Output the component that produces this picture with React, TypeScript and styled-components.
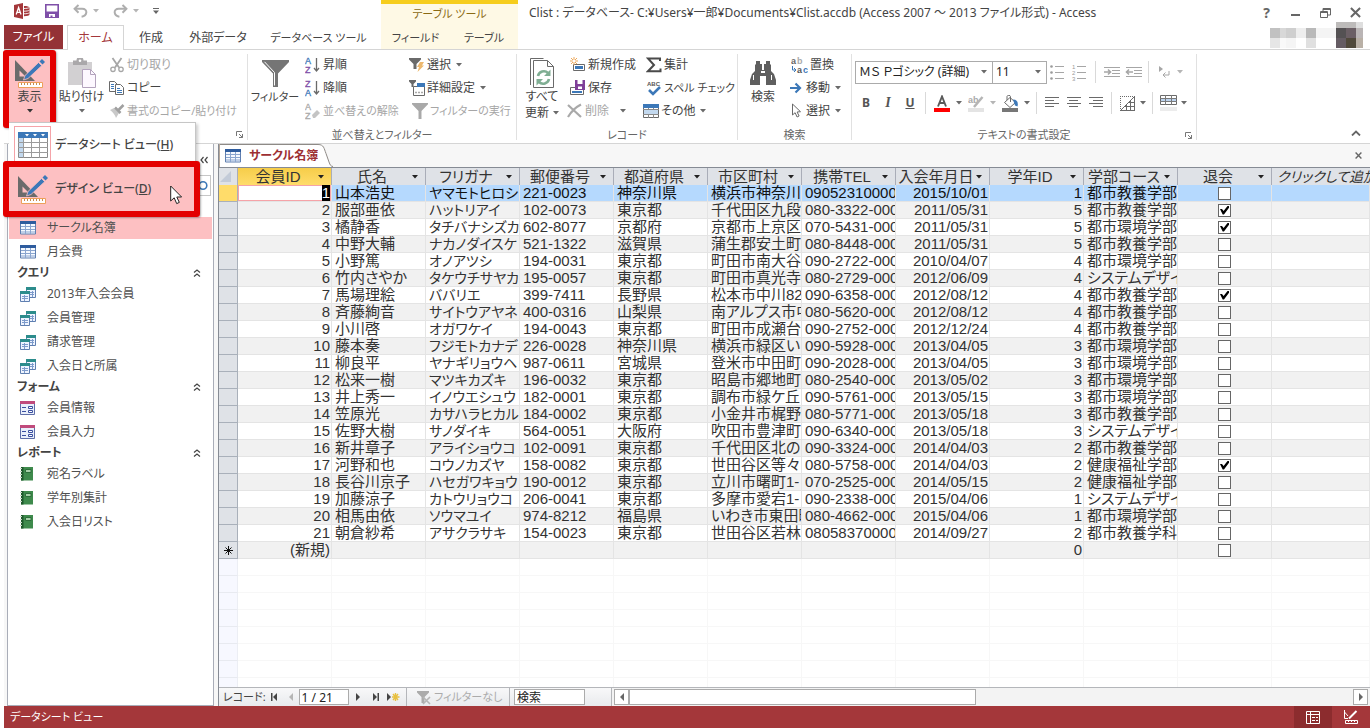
import React from "react";
import styled, { createGlobalStyle, css } from "styled-components";

const GlobalStyle = createGlobalStyle`
  *, *::before, *::after { box-sizing: border-box; }
  body { margin: 0; background: #fff; }
  body, button, input, select {
    font-family: "Noto Sans", "Noto Sans CJK JP", sans-serif;
    font-feature-settings: "palt";
    font-size: 12px;
    line-height: 16px;
    color: #444;
  }
  button { border: 0; padding: 0; background: none; white-space: nowrap; }
`;

const RED = "#a4373a";
const BLUE = "#3c78b8";
const GREY = "#6a6a6a";

/* ---------- icons ---------- */

const Caret = ({ color = "#6a6a6a" }: { color?: string }) => (
  <svg width="6" height="4" viewBox="0 0 6 4" aria-hidden="true">
    <path d="M0 0h6L3 3.5z" fill={color} />
  </svg>
);

const AccessLogo = () => (
  <svg width="17" height="16" viewBox="0 0 17 16" aria-hidden="true">
    <path d="M0 2l9-2v16l-9-2z" fill={RED} />
    <path d="M2.2 11.5L4.6 4.5l2.4 7M3.1 9.4h3" stroke="#fff" strokeWidth="1.3" fill="none" />
    <path d="M10 3c3 0 5.500.600 5.500 1.500v7c0 1-2.500 1.700-5.500 1.700z" fill={RED} />
    <path d="M10 5.500c2.500 0 4.500-.400 5.500-1M10 8.200c2.500 0 4.500-.400 5.500-1M10 10.800c2.500 0 4.500-.400 5.500-1" fill="none" stroke="#fff" strokeWidth=".9" />
  </svg>
);

const SaveIcon = () => (
  <svg width="14" height="14" viewBox="0 0 14 14" aria-hidden="true">
    <path d="M.8.8h12.4v12.4H.8z" fill="#fff" stroke="#7f4fa8" strokeWidth="1.6" />
    <path d="M1 7.500h12V13H1z" fill="#7f4fa8" />
    <path d="M4 10h6v3H7.500v-1.500H5.500V13H4z" fill="#fff" />
  </svg>
);

const UndoIcon = ({ flip = false }: { flip?: boolean }) => (
  <svg width="15" height="14" viewBox="0 0 15 14" aria-hidden="true">
    <g transform={flip ? "translate(15 0) scale(-1 1)" : undefined} fill="none" stroke="#aeaeae" strokeWidth="2">
      <path d="M5.5 1L1.6 4.8l3.9 3.9" />
      <path d="M2 4.8h7.2c6 0 5.2 7-.6 8" />
    </g>
  </svg>
);

const DesignIcon = () => (
  <svg width="30" height="29" viewBox="0 0 30 29" aria-hidden="true">
    <path d="M0 1v21h20z" fill="#6b6b6b" />
    <path d="M4.500 11.500v6h6z" fill="#fdc0c2" />
    <path d="M27 0l3 3-2.500 2.500-3-3z" fill={BLUE} />
    <path d="M23.500 3.500l3.200 3.200L13 19.500 8.500 21l1.500-4.500z" fill={BLUE} stroke="#fdc0c2" strokeWidth=".8" />
    <path d="M3.500 23.500h24v5h-24z" fill="#fff" stroke="#eda05a" />
    <path d="M6.500 24v2M9.500 24v2M12.500 24v2M15.500 24v2M18.500 24v2M21.500 24v2M24.500 24v2" stroke="#c98a4e" />
  </svg>
);

const SheetIcon = () => (
  <svg width="30" height="26" viewBox="0 0 30 26" aria-hidden="true">
    <path d="M.5.5h29v25H.5z" fill="#fff" stroke="#8a8a8a" />
    <path d="M0 0h30v6H0z" fill={BLUE} />
    <path d="M1 6h4v19H1z" fill="#c3d9ef" />
    <path d="M5.500 6v20M13.500 6v20M21.500 6v20M0 10.500h30M0 15.500h30M0 20.500h30" stroke="#9b9b9b" />
    <path d="M7 2h4l-2 2.500zM15 2h4l-2 2.500zM23 2h4l-2 2.500z" fill="#fff" />
  </svg>
);

const PasteIcon = () => (
  <svg width="28" height="31" viewBox="0 0 28 31" aria-hidden="true">
    <path d="M0 4h24v23H0z" fill="#d2d0d2" />
    <path d="M5 2.500h3.500a3.500 3.500 0 0 1 7 0H19V7H5z" fill="#aaa8aa" />
    <circle cx="12" cy="2.800" r="1.300" fill="#fff" />
    <path d="M14.500 11.500h8l5 5v13h-13z" fill="#fdf8ff" stroke="#b3a3bd" />
    <path d="M22.500 11.500v5h5" fill="none" stroke="#b3a3bd" />
  </svg>
);

const CutIcon = () => (
  <svg width="16" height="16" viewBox="0 0 16 16" fill="none" stroke="#a6a6a6" aria-hidden="true">
    <path d="M3.500 1l6.500 9.500M12.500 1L6 10.500" strokeWidth="1.800" />
    <circle cx="4" cy="12.300" r="2.200" strokeWidth="1.300" />
    <circle cx="12" cy="12.300" r="2.200" strokeWidth="1.300" />
  </svg>
);

const CopyIcon = () => (
  <svg width="16" height="16" viewBox="0 0 16 16" fill="#fff" stroke="#6a6a6a" aria-hidden="true">
    <path d="M.500 1.500h5l3 3v7h-8z" />
    <path d="M2 4.500h3M2 6.500h3M2 8.500h3" stroke={BLUE} />
    <path d="M6.500 4.500h5l3 3v7h-8z" />
    <path d="M8 8.500h3M8 10.500h5M8 12.500h5" stroke={BLUE} />
  </svg>
);

const BrushIcon = () => (
  <svg width="16" height="16" viewBox="0 0 16 16" aria-hidden="true">
    <path d="M1 7l4-2 5 5-3 5c-1-3-3-6-6-8z" fill="#c9c9c9" />
    <path d="M6 4.500l5.500 5.500M9.500 7L14.500 2" stroke="#a0a0a0" strokeWidth="2.600" />
  </svg>
);

const FunnelIcon = ({ size = 27, color = "#757575" }: { size?: number; color?: string }) => (
  <svg width={size} height={size} viewBox="0 0 27 27" aria-hidden="true">
    <path d="M0 0h27v2L16 13.500V27h-5V13.500L0 2z" fill={color} />
    {size > 20 && <path d="M2.500 1.800L12.500 12.500V25.500" fill="none" stroke="#fff" />}
  </svg>
);

type SortProps = { top: string; bottom: string; topColor: string; bottomColor: string; clear?: boolean };
const SortIcon = ({ top, bottom, topColor, bottomColor, clear }: SortProps) => (
  <svg width="16" height="18" viewBox="0 0 16 18" aria-hidden="true" fontFamily="Liberation Sans" fontSize="9">
    <text x="0" y="8" fill={topColor} stroke={topColor} strokeWidth=".3">{top}</text>
    <text x="0" y="17" fill={bottomColor} stroke={bottomColor} strokeWidth=".3">{bottom}</text>
    {clear ? (
      <path d="M7 13l5-5 3 3-5 5H8z" fill="#c4c4c4" />
    ) : (
      <path d="M11.500 2v13M9 12l2.500 3 2.500-3" fill="none" stroke="#6a6a6a" strokeWidth="1.300" />
    )}
  </svg>
);

const FilterSelectIcon = () => (
  <svg width="16" height="16" viewBox="0 0 16 16" aria-hidden="true">
    <path d="M0 1h12v1.500L7.500 7v5H4.500V7L0 2.500z" fill={GREY} />
    <path d="M11 5h4l-2 3.500h2L8.500 15l1.500-5H8z" fill="#edb96f" />
  </svg>
);

const AdvancedIcon = () => (
  <svg width="16" height="16" viewBox="0 0 16 16" aria-hidden="true">
    <path d="M4.500 6.500h11v9h-11z" fill="#fff" stroke="#6a6a6a" />
    <path d="M8 3h8v4H8z" fill={BLUE} />
    <path d="M0 0h7v1.500L4.500 4v3h-2V4L0 1.500z" fill={GREY} />
    <path d="M6.500 12.500h1M9.500 12.500h1M12.500 12.500h1" stroke="#555" strokeWidth="1.500" />
  </svg>
);

const RefreshIcon = () => (
  <svg width="25" height="31" viewBox="0 0 25 31" aria-hidden="true" fill="#fff" stroke="#6a6a6a">
    <path d="M.500 27V.500h13" fill="none" />
    <path d="M3.500 2.500h14l6 6v21h-20z" />
    <path d="M17.500 2.500v6h6" fill="none" />
    <path d="M8 18a6 6 0 0 1 10-3M19 21a6 6 0 0 1-10 3" fill="none" stroke="#7fae93" strokeWidth="2.600" />
    <path d="M20.500 11.500v6.500h-6.500zM6.500 27.500v-6.500h6.500z" fill="#7fae93" stroke="none" />
  </svg>
);

const NewRecordIcon = () => (
  <svg width="16" height="16" viewBox="0 0 16 16" aria-hidden="true">
    <path d="M3.500 7.500h11v6h-11z" fill="#fff" stroke="#6a6a6a" />
    <path d="M5 9h8v3H5z" fill={BLUE} />
    <path d="M4 0v8M0 4h8M1 1l6 6M7 1L1 7" stroke="#eda95c" />
    <circle cx="4" cy="4" r="1.300" fill="#fff" />
  </svg>
);

const SaveRecordIcon = () => (
  <svg width="16" height="16" viewBox="0 0 16 16" aria-hidden="true">
    <path d="M.500 7.500h13v7H.500z" fill="#fff" stroke="#6a6a6a" />
    <path d="M2 11h10v2H2z" fill={BLUE} />
    <path d="M5 0h10v10H5z" fill="#7f3f98" />
    <path d="M7.500 0h5v4h-5zM8 6.500h4V9H8z" fill="#fff" />
  </svg>
);

const DeleteIcon = () => (
  <svg width="16" height="16" viewBox="0 0 16 16" aria-hidden="true">
    <path d="M1 2l13 12M14 1.500C9 4 4 9 1 14" stroke="#a9a9a9" strokeWidth="2.200" fill="none" />
  </svg>
);

const SigmaIcon = () => (
  <svg width="16" height="16" viewBox="0 0 16 16" aria-hidden="true">
    <path d="M14 4V1.500H2L8 8l-6 6.200h12.500V11.500" fill="none" stroke="#4a4a4a" strokeWidth="2" />
  </svg>
);

const SpellIcon = () => (
  <svg width="16" height="16" viewBox="0 0 16 16" aria-hidden="true">
    <text x="1" y="6" fontFamily="Liberation Sans" fontWeight="bold" fontSize="6" fill="#555">ABC</text>
    <path d="M3 10l4 4 7-7" fill="none" stroke={BLUE} strokeWidth="2.600" />
  </svg>
);

const MoreIcon = () => (
  <svg width="16" height="16" viewBox="0 0 16 16" aria-hidden="true">
    <path d="M.500 1.500h15v13H.500z" fill="#fff" stroke="#6a6a6a" />
    <path d="M0 1h16v4H0z" fill={BLUE} />
    <path d="M5.500 5v10M10.500 5v10" stroke="#8a8a8a" />
    <path d="M1 7h14v4H1z" fill="#c3d9ef" />
    <path d="M0 11.500h16M0 6.500h16" stroke="#8a8a8a" />
  </svg>
);

const BinocularsIcon = () => (
  <svg width="26" height="24" viewBox="0 0 26 24" aria-hidden="true" fill="#5f5f5f">
    <path d="M6 0h4v3h2v6h2V3h2V0h4v3l1 1v6l3 3 2 6v5h-10v-9h-6v9H0v-5l2-6 3-3V4l1-1z" />
    <path d="M3.500 14v5M21.500 14v5" stroke="#fff" />
    <path d="M11 10h4v2h-4z" fill="#fff" />
  </svg>
);

const ReplaceIcon = () => (
  <svg width="17" height="17" viewBox="0 0 17 17" aria-hidden="true" fontFamily="Liberation Sans" fontSize="9" fontWeight="bold">
    <text x="0" y="7" fill="#666">a</text>
    <text x="6" y="7" fill="#aaa">b</text>
    <text x="6" y="16" fill="#555">a</text>
    <text x="12" y="16" fill={BLUE}>c</text>
    <path d="M1.500 9v4H5M3 11l2 2-2 2" fill="none" stroke={BLUE} />
  </svg>
);

const GotoIcon = () => (
  <svg width="16" height="16" viewBox="0 0 16 16" aria-hidden="true">
    <path d="M2 8h9M7.500 3.500L12 8l-4.500 4.500" fill="none" stroke={BLUE} strokeWidth="2.200" />
  </svg>
);

const PointerIcon = () => (
  <svg width="16" height="16" viewBox="0 0 16 16" aria-hidden="true">
    <path d="M4.500 1v11l2.600-2.300 2 4.300 2-1-2-4 3.400-.300z" fill="#fff" stroke="#6a6a6a" />
  </svg>
);

const ListIcon = ({ numbered = false }: { numbered?: boolean }) => (
  <svg width="16" height="17" viewBox="0 0 16 17" aria-hidden="true" fontFamily="Liberation Sans" fontSize="6" fill="#9a9a9a">
    <path d="M5 2.500h9M5 8.500h9M5 14.500h9" stroke="#a6a6a6" />
    {numbered ? (
      <>
        <text x="0" y="5">1</text><text x="0" y="11">2</text><text x="0" y="17">3</text>
      </>
    ) : (
      <>
        <circle cx="1.500" cy="2.500" r="1.300" /><circle cx="1.500" cy="8.500" r="1.300" /><circle cx="1.500" cy="14.500" r="1.300" />
      </>
    )}
  </svg>
);

const IndentIcon = ({ out = false }: { out?: boolean }) => (
  <svg width="17" height="12" viewBox="0 0 17 12" aria-hidden="true" stroke="#a6a6a6" fill="none">
    <path d="M1 1.500h16M9 4.500h8M9 7.500h8M1 10.500h16" />
    <path d={out ? "M8 6H1.500M4 3.500L1.500 6 4 8.500" : "M1 6h6.500M5 3.500L7.500 6 5 8.500"} strokeWidth="1.600" />
  </svg>
);

const DirectionIcon = () => (
  <svg width="12" height="12" viewBox="0 0 12 12" aria-hidden="true">
    <path d="M1 0v6l4-3z" fill="#a6a6a6" />
    <path d="M11 5v4H5M7.500 6.500L5 9l2.500 2.500" fill="none" stroke="#a6a6a6" />
  </svg>
);

const FontColorIcon = () => (
  <svg width="16" height="17" viewBox="0 0 16 17" aria-hidden="true">
    <path d="M4 11.500L8 1.500l4 10M5.500 8h5" fill="none" stroke="#5a5a5a" strokeWidth="1.900" />
    <path d="M0 13h16v4H0z" fill="#f00" />
  </svg>
);

const HighlightIcon = () => (
  <svg width="16" height="17" viewBox="0 0 16 17" aria-hidden="true">
    <text x="0" y="8" fontFamily="Liberation Sans" fontWeight="bold" fontSize="9" fill="#aaa">ab</text>
    <path d="M6 12l8.500-10" stroke="#b5b5b5" strokeWidth="2.500" />
    <path d="M0 13h16v4H0z" fill="#e4e4e4" />
  </svg>
);

const FillIcon = () => (
  <svg width="17" height="17" viewBox="0 0 17 17" aria-hidden="true">
    <path d="M8 2.500L2.500 7.500 8 12.500l5.500-5z" fill="#fff" stroke="#6a6a6a" />
    <path d="M5 5V1.500C5 0 8.500 0 8.500 1.500V7" fill="none" stroke="#6a6a6a" />
    <path d="M11 4.500c4 0 5.500 3 4.500 7l-2.500-1z" fill={BLUE} />
    <path d="M0 13h16v4H0z" fill="#777" />
  </svg>
);

const alignLines = {
  left: "M1 3.500h9M1 9.500h9",
  center: "M3 3.500h9M3 9.500h9",
  right: "M5 3.500h10M5 9.500h10",
};
const AlignIcon = ({ kind }: { kind: keyof typeof alignLines }) => (
  <svg width="16" height="12" viewBox="0 0 16 12" aria-hidden="true" stroke="#6a6a6a">
    <path d={"M1 .500h14M1 6.500h14" + alignLines[kind]} />
  </svg>
);

const GridlinesIcon = () => (
  <svg width="15" height="15" viewBox="0 0 15 15" aria-hidden="true" fill="none" stroke="#6a6a6a">
    <path d="M0 .500h15M.500 0v14" strokeDasharray="1 1" />
    <path d="M0 14.500h15M14.500 1v14M1 14L14 1M4 10.500h10M8 6.500h6M6.500 9v5M10.500 5v9" />
  </svg>
);

const AltRowIcon = () => (
  <svg width="17" height="16" viewBox="0 0 17 16" aria-hidden="true">
    <path d="M.500.500h16v9H.500z" fill="#fff" stroke="#6a6a6a" />
    <path d="M1 4h15v2H1z" fill="#bcd3ee" />
    <path d="M0 3.500h17M0 6.500h17M5.500 0v10M11.500 0v10" stroke="#7a7a7a" />
    <path d="M0 12h17v4H0z" fill="#ececec" />
  </svg>
);

const LauncherIcon = () => (
  <svg width="7" height="7" viewBox="0 0 7 7" aria-hidden="true" fill="none" stroke="#777">
    <path d="M.500 5V.500H6M3 3l3.500 3.500M6.500 3v3.500H3" />
  </svg>
);

const TableIcon = () => (
  <svg width="16" height="14" viewBox="0 0 16 14" aria-hidden="true">
    <path d="M.500.500h15v12.500H.500z" fill="#f5f9ff" stroke="#5f7fb0" />
    <path d="M0 0h16v3H0z" fill="#2e5c9e" />
    <path d="M1 5.500h14M1 8.500h14M1 11h14M5.500 3v10M10.500 3v10" stroke="#8aa5cf" />
  </svg>
);

const QueryIcon = () => (
  <svg width="16" height="15" viewBox="0 0 16 15" aria-hidden="true">
    <path d="M6.500.500h9v10h-9z" fill="#eef4ff" stroke="#5f7fb0" />
    <path d="M6 0h10v3H6z" fill="#2c8c8c" />
    <path d="M8 5.500h6M8 7.500h6M12.500 4v6" stroke="#7d9bcb" />
    <path d="M.500 4.500h9v10h-9z" fill="#eef4ff" stroke="#5f7fb0" />
    <path d="M0 4h10v3H0z" fill="#2c8c8c" />
    <path d="M2 9.500h6M2 11.500h6M4.500 8v6" stroke="#7d9bcb" />
  </svg>
);

const FormIcon = () => (
  <svg width="15" height="14" viewBox="0 0 15 14" aria-hidden="true">
    <path d="M.500.500h14v13H.500z" fill="#e9effb" stroke="#5f6fa8" />
    <path d="M0 0h15v3H0z" fill="#c04a7c" />
    <path d="M2 6.500h4M2 10.500h4" stroke="#3a4fa0" />
    <path d="M8.500 5.500h4v2h-4zM8.500 9.500h4v2h-4z" fill="#fff" stroke="#3a4fa0" />
  </svg>
);

const ReportIcon = () => (
  <svg width="14" height="14" viewBox="0 0 14 14" aria-hidden="true">
    <path d="M1 0h12v13.500H1z" fill="#3e8a4c" />
    <path d="M1 0h2.500v13.500H1z" fill="#1f5a2c" />
    <path d="M0 1.500h2M0 4.500h2M0 7.500h2M0 10.500h2" stroke="#c8d8c8" />
    <path d="M5.500 2.500h5.500v3H5.500z" fill="#a6cfa8" stroke="#2c6e3a" />
  </svg>
);

const iconFor = { table: TableIcon, query: QueryIcon, form: FormIcon, report: ReportIcon };

const DoubleChevron = ({ left = false }: { left?: boolean }) => (
  <svg width="8" height="8" viewBox="0 0 8 8" aria-hidden="true" fill="none" stroke="#444" strokeWidth="1.200">
    <path d={left ? "M3.500 1L1 4l2.500 3M7.500 1L5 4l2.500 3" : "M1 3.500L4 1l3 2.500M1 7.500L4 5l3 2.500"} />
  </svg>
);

const Cross = ({ size = 12, stroke = 2.2 }: { size?: number; stroke?: number }) => (
  <svg width={size} height={size} viewBox="0 0 12 12" aria-hidden="true">
    <path d="M1 1l10 10M11 1L1 11" stroke="#666" strokeWidth={stroke} />
  </svg>
);

const Arrow = ({ kind, color = "#444" }: { kind: "first" | "prev" | "next" | "last" | "new"; color?: string }) => (
  <svg width="14" height="8" viewBox="0 0 14 8" aria-hidden="true" fill={color}>
    {kind === "first" && <path d="M4 0h1.500v8H4zM10 0v8L6 4z" />}
    {kind === "prev" && <path d="M9 0v8L5 4z" />}
    {kind === "next" && <path d="M5 0v8l4-4z" />}
    {kind === "last" && <path d="M4 0v8l4-4zM8.500 0H10v8H8.500z" />}
    {kind === "new" && (
      <>
        <path d="M1 0v8l4-4z" />
        <path d="M9.500 0v8M6 4h7.500M7 1l5 6M12 1L7 7" stroke="#e8c040" strokeWidth="1.400" />
      </>
    )}
  </svg>
);

/* ---------- window header ---------- */

const Shell = styled.div`
  display: flex;
  flex-direction: column;
  height: 100vh;
  padding-left: 4px;
  overflow: hidden;
`;

const Header = styled.header`
  display: flex;
  flex: none;
  height: 50px;
  border-bottom: 1px solid #d5d5d5;
`;

const LeftHead = styled.div`
  display: grid;
  grid-template-rows: 25px 25px;
  width: 377px;
`;

const QuickAccess = styled.div`
  display: flex;
  align-items: center;
  gap: 14px;
  padding: 0 0 3px 10px;
`;

const PlainButton = styled.button<{ $gap?: number }>`
  display: inline-flex;
  align-items: center;
  gap: ${(p) => p.$gap ?? 0}px;
`;

const Tabs = styled.nav`
  display: flex;
`;

const Tab = styled.button<{ $w: number; $kind?: "file" | "active"; $compact?: boolean }>`
  width: ${(p) => p.$w}px;
  height: 25px;
  text-align: center;
  font-size: ${(p) => (p.$compact ? 11 : 12)}px;
  ${(p) => p.$kind === "file" && css`
    background: #943236;
    color: #fff;
    margin-right: 4px;
    height: 24px;
  `}
  ${(p) => p.$kind === "active" && css`
    background: #fff;
    color: ${RED};
    border: 1px solid #d5d5d5;
    border-bottom: 0;
  `}
`;

const ContextHead = styled.div`
  display: grid;
  grid-template-rows: 21px 24px;
  width: 137px;
  background: #fef9e5;
  border-top: 4px solid #f6cd1d;
`;

const ContextTitle = styled.div`
  padding-top: 2px;
  text-align: center;
  font-size: 11px;
  color: #8a6a14;
`;

const RightHead = styled.div`
  flex: 1;
  min-width: 0;
  display: grid;
  grid-template-rows: 22px 27px;
`;

const TitleRow = styled.div`
  display: flex;
  align-items: center;
  justify-content: space-between;
  padding: 3px 9px 0 11px;
  white-space: nowrap;
`;

const WindowButtons = styled.div`
  display: flex;
  align-items: center;
  gap: 19px;
`;

const HelpMark = styled.button`
  padding-right: 2px;
  font-size: 14px;
  font-weight: 700;
  color: #666;
`;

const Account = styled.div`
  justify-self: end;
  padding-right: 7px;
`;

/* ---------- ribbon ---------- */

const RibbonBar = styled.div`
  display: flex;
  flex: none;
  padding: 4px 0 3px;
  border-bottom: 1px solid #d5d5d5;
  background: #fff;
`;

const Group = styled.section<{ $w: number }>`
  width: ${(p) => p.$w}px;
  flex: none;
  border-right: 1px solid #e1e1e1;
`;

const GroupBody = styled.div<{ $indent?: number }>`
  display: flex;
  height: 74px;
  padding-left: ${(p) => p.$indent ?? 0}px;
`;

const GroupFooter = styled.div`
  display: grid;
  grid-template-columns: 16px 1fr 16px;
  height: 12px;
  font-size: 11px;
  line-height: 14px;
  text-align: center;
  color: #666;
  white-space: nowrap;
`;

const FooterLabel = styled.span`
  grid-column: 2;
`;

const Launcher = styled.button`
  display: grid;
  place-items: center;
`;

const BigButton = styled.button<{ $w: number; $compact?: boolean }>`
  display: flex;
  flex-direction: column;
  align-items: center;
  width: ${(p) => p.$w}px;
  padding-top: 3px;
  font-size: ${(p) => (p.$compact ? 11 : 12)}px;
`;

const BigIcon = styled.span`
  display: grid;
  place-items: center;
  height: 32px;
`;

const CaretSlot = styled.span`
  display: grid;
  place-items: center;
  height: 12px;
`;

const SmallColumn = styled.div<{ $w?: number }>`
  display: flex;
  flex-direction: column;
  gap: 1px;
  width: ${(p) => (p.$w ? p.$w + "px" : "auto")};
`;

const SmallButton = styled.button<{ $dim?: boolean; $compact?: boolean }>`
  display: flex;
  align-items: center;
  gap: 2px;
  height: 22px;
  font-size: ${(p) => (p.$compact ? 11 : 12)}px;
  color: ${(p) => (p.$dim ? "#a6a6a6" : "#444")};
  & > svg:first-child { flex: none; }
  & > svg:last-child { margin-left: 3px; }
`;

const ViewAnchor = styled.div`
  position: relative;
  z-index: 5;
  width: 41px;
  margin: 2px 7px 6px 5px;
`;

const ViewButton = styled.button`
  display: flex;
  flex-direction: column;
  align-items: center;
  width: 41px;
  height: 66px;
  padding-top: 1px;
  background: #fdc0c2;
`;

const HighlightFrame = styled.div`
  position: absolute;
  inset: -6px;
  border: 6px solid #e30000;
  border-radius: 3px;
  box-shadow: 1px 1px 2px rgba(0, 0, 0, 0.3);
  pointer-events: none;
`;

const Menu = styled.div`
  position: absolute;
  top: 66px;
  left: 0;
  width: 187px;
  border: 1px solid #c6c6c6;
  border-left: 0;
  background: #fff;
  box-shadow: 2px 2px 3px rgba(0, 0, 0, 0.2);
`;

const MenuItem = styled.button<{ $hot?: boolean }>`
  position: relative;
  display: flex;
  align-items: center;
  gap: 4px;
  width: 185px;
  height: 44px;
  padding-left: 5px;
  background: ${(p) => (p.$hot ? "#fdc0c2" : "#fff")};
  font-weight: 500;
  text-align: left;
`;

const MenuIcon = styled.span<{ $boxed?: boolean }>`
  display: grid;
  place-items: center;
  width: 37px;
  height: 38px;
  border: 1px solid ${(p) => (p.$boxed ? "#f5a3a8" : "transparent")};
`;

const MouseCursor = styled.svg`
  position: absolute;
  top: 18px;
  left: 161px;
`;

const FormatRows = styled.div`
  display: flex;
  flex-direction: column;
  gap: 9px;
  padding-top: 7px;
`;

const FormatRow = styled.div`
  display: flex;
  align-items: center;
  height: 22px;
`;

const Combo = styled.label<{ $w: number }>`
  display: grid;
  grid-template-columns: 1fr 16px;
  align-items: center;
  width: ${(p) => p.$w}px;
  height: 23px;
  border: 1px solid #ababab;
  & + & { border-left: 0; }
  & > select { grid-area: 1 / 1 / 2 / 3; }
  & > svg { grid-area: 1 / 2; justify-self: center; pointer-events: none; }
`;

const ComboSelect = styled.select`
  appearance: none;
  width: 100%;
  height: 21px;
  padding: 0 3px;
  border: 0;
  background: none;
  color: #222;
`;

const ToolButton = styled.button<{ $w?: number; $glyph?: "b" | "i" | "u" }>`
  display: grid;
  place-items: center;
  width: ${(p) => p.$w ?? 22}px;
  height: 22px;
  ${(p) => p.$glyph && css`font-weight: 700; font-size: 12px; color: #555;`}
  ${(p) => p.$glyph === "i" && css`font-style: italic; font-family: "Liberation Serif", serif; font-size: 14px;`}
  ${(p) => p.$glyph === "u" && css`text-decoration: underline;`}
`;

const Divider = styled.span`
  width: 1px;
  height: 22px;
  margin: 0 4px;
  background: #d9d9d9;
`;

const Collapse = styled.button`
  margin-left: auto;
  align-self: flex-end;
  padding: 0 9px 0 0;
`;

/* ---------- main area ---------- */

const Main = styled.main`
  display: flex;
  flex: 1;
  min-height: 0;
  padding-left: 3px;
  background: #f7f7f7;
`;

const NavPane = styled.aside`
  width: 207px;
  flex: none;
  border: 1px solid #a9adb8;
  border-top: 0;
  background: #fff;
`;

const NavTop = styled.div`
  display: flex;
  justify-content: flex-end;
  align-items: center;
  height: 31px;
  padding-right: 5px;
`;

const SearchBox = styled.label`
  display: flex;
  align-items: center;
  height: 21px;
  margin: 0 2px 20px 4px;
  padding-right: 2px;
  border: 1px solid #c6c6c6;
`;

const SearchInput = styled.input`
  flex: 1;
  min-width: 0;
  height: 18px;
  border: 0;
  outline: 0;
`;

const NavHeading = styled.h2`
  display: flex;
  align-items: center;
  justify-content: space-between;
  height: 18px;
  margin: 0;
  padding: 0 12px 0 9px;
  font-size: 12px;
  line-height: 18px;
  font-weight: 600;
`;

const NavList = styled.ul`
  margin: 0;
  padding: 0;
  list-style: none;
`;

const NavEntry = styled.li`
  padding: 1px;
`;

const NavItem = styled.a<{ $selected?: boolean }>`
  display: grid;
  grid-template-columns: 16px 1fr;
  align-items: center;
  gap: 11px;
  height: 22px;
  padding-left: 11px;
  background: ${(p) => (p.$selected ? "#fdc0c2" : "transparent")};
  color: #505050;
  text-decoration: none;
`;

const DocArea = styled.section`
  display: flex;
  flex-direction: column;
  flex: 1;
  min-width: 0;
  margin-left: 4px;
  border-left: 1px solid #868b94;
`;

const DocStrip = styled.div`
  display: flex;
  align-items: center;
  justify-content: space-between;
  flex: none;
  height: 23px;
  padding-right: 8px;
`;

const DocTab = styled.button`
  display: flex;
  align-items: center;
  height: 23px;
  border-left: 1px solid #b5a89c;
  color: #9d2f33;
  font-weight: 700;
`;

const DocTabFace = styled.span`
  display: flex;
  align-items: center;
  gap: 8px;
  height: 23px;
  padding-left: 5px;
  border-top: 1px solid #8e8a86;
  background: #fff;
`;

const GridView = styled.div`
  flex: 1;
  min-height: 0;
  overflow: hidden;
  border-top: 1px solid #868b94;
  background: #fff;
`;

const DataTable = styled.table`
  table-layout: fixed;
  width: 100%;
  border-collapse: separate;
  border-spacing: 0;
  font-family: "Liberation Sans", "Noto Sans CJK JP", sans-serif;
  font-size: 15px;
  line-height: 16px;
  color: #333;
`;

const SelectorCol = styled.col`
  width: 19px;
`;

const FieldCol = styled.col`
  width: 94px;
`;

const HeadCell = styled.th<{ $active?: boolean; $ghost?: boolean }>`
  height: 17px;
  padding: 0 5px 0 0;
  border-right: 1px solid #a9adb8;
  background: ${(p) => (p.$active ? "linear-gradient(#f6cd4a, #ffdc6a)" : "#dfe2e7")};
  font-weight: 400;
  white-space: nowrap;
  overflow: hidden;
  ${(p) => p.$ghost && css`
    padding: 0 0 0 5px;
    border-right: 0;
    font-size: 14px;
    font-style: italic;
    text-align: left;
  `}
`;

const HeadInner = styled.span`
  display: grid;
  grid-template-columns: 1fr 8px;
  align-items: center;
  height: 17px;
`;

const HeadText = styled.span`
  text-align: center;
`;

const SelectAllMark = styled.svg`
  display: block;
  margin: 0 auto;
`;

type CellProps = { $right?: boolean; $center?: boolean; $kana?: boolean; $editing?: boolean };
const Cell = styled.td<CellProps>`
  height: 17px;
  padding: 0 3px;
  border-right: 1px solid #e4e4e4;
  border-bottom: 1px solid #e4e4e4;
  white-space: nowrap;
  overflow: hidden;
  text-overflow: clip;
  text-align: ${(p) => (p.$right ? "right" : p.$center ? "center" : "left")};
  ${(p) => p.$right && css`padding-right: 1px;`}
  ${(p) => p.$kana && css`font-size: 14px;`}
  ${(p) => p.$editing && css`background: #fff; box-shadow: inset 0 0 0 1px #f5a3a8;`}
`;

const Selector = styled.th<{ $current?: boolean; $blank?: boolean }>`
  height: 17px;
  padding: 0;
  border-right: 1px solid ${(p) => (p.$blank ? "#eceef4" : "#a9b0ba")};
  border-bottom: 1px solid ${(p) => (p.$blank ? "#e8eaf0" : "#a9b0ba")};
  background: ${(p) => (p.$current ? "#ffdc6a" : p.$blank ? "#f7f8ff" : "#dfe2e7")};
  color: #222;
`;

const Row = styled.tr<{ $tone: "current" | "odd" | "even" | "blank" }>`
  background: ${(p) => ({ current: "#b5d9fe", odd: "#fff", even: "#f1f1f1", blank: "#fff" })[p.$tone]};
  ${(p) => p.$tone === "current" && css`color: #111;`}
  ${(p) => p.$tone === "blank" && css`& > td { border-color: #f7f7f7; }`}
`;

const EditSelection = styled.mark`
  background: #000;
  color: #fff;
`;

const Tick = styled.input`
  appearance: none;
  display: block;
  width: 13px;
  height: 13px;
  margin: 0 auto;
  padding: 1px;
  border: 1px solid #666;
  background: #fff;
  &:checked::before {
    content: "";
    display: block;
    width: 9px;
    height: 9px;
    background: #000;
    clip-path: polygon(0 38%, 22% 38%, 40% 62%, 88% 0, 100% 8%, 100% 26%, 44% 100%, 30% 100%);
  }
`;

const RecordBar = styled.div`
  display: flex;
  align-items: stretch;
  flex: none;
  height: 19px;
  border-top: 1px solid #b4b6ba;
  background: linear-gradient(#f8f8f9, #e8eaed);
`;

const RecordSection = styled.div<{ $w: number }>`
  display: flex;
  align-items: center;
  width: ${(p) => p.$w}px;
  flex: none;
  padding: 0 4px;
  border-right: 1px solid #b4b6ba;
  white-space: nowrap;
`;

const RecordLabel = styled.span`
  width: 42px;
  font-size: 11px;
`;

const FilterState = styled.button`
  display: flex;
  align-items: center;
  gap: 1px;
  font-size: 11px;
  color: #ababab;
`;

const RecordInput = styled.input<{ $w: number }>`
  width: ${(p) => p.$w}px;
  height: 16px;
  padding: 0 2px;
  border: 1px solid #ababab;
  background: #fff;
  color: #222;
  line-height: 14px;
`;

const NavStep = styled.button<{ $w: number }>`
  display: grid;
  place-items: center;
  width: ${(p) => p.$w}px;
`;

const ScrollBar = styled.div`
  display: flex;
  flex: 1;
  min-width: 0;
  padding: 1px 2px;
  background: #f3f3f3;
`;

const ScrollStep = styled.button`
  display: grid;
  place-items: center;
  width: 15px;
  flex: none;
  border: 1px solid #ababab;
  background: #fff;
`;

const ScrollThumb = styled.div`
  width: 46%;
  border: 1px solid #ababab;
  background: #fff;
`;

const ScrollRest = styled.div`
  flex: 1;
`;

const StatusBar = styled.footer`
  display: flex;
  align-items: center;
  flex: none;
  height: 22px;
  padding-left: 6px;
  background: ${RED};
  color: #fff;
`;

const StatusText = styled.span`
  flex: 1;
  font-size: 11px;
`;

const StatusButton = styled.button<{ $on?: boolean }>`
  display: grid;
  place-items: center;
  width: 38px;
  height: 22px;
  background: ${(p) => (p.$on ? "#8c2c2e" : "transparent")};
`;

/* ---------- data ---------- */

type Member = [string, string, string, string, string, string, string, number, string, boolean?];

const members: Member[] = [
  ["山本浩史", "ヤマモトヒロシ", "221-0023", "神奈川県", "横浜市神奈川", "09052310000", "2015/10/01", 1, "都市教養学部"],
  ["服部亜依", "ハットリアイ", "102-0073", "東京都", "千代田区九段", "080-3322-0000", "2011/05/31", 5, "都市教養学部", true],
  ["橘静香", "タチバナシズカ", "602-8077", "京都府", "京都市上京区", "070-5431-0000", "2011/05/31", 5, "都市環境学部", true],
  ["中野大輔", "ナカノダイスケ", "521-1322", "滋賀県", "蒲生郡安土町", "080-8448-0000", "2011/05/31", 5, "都市教養学部"],
  ["小野篤", "オノアツシ", "194-0031", "東京都", "町田市南大谷", "090-2722-0000", "2010/04/07", 4, "都市環境学部"],
  ["竹内さやか", "タケウチサヤカ", "195-0057", "東京都", "町田市真光寺", "080-2729-0000", "2012/06/09", 4, "システムデザイン"],
  ["馬場理絵", "ババリエ", "399-7411", "長野県", "松本市中川82", "090-6358-0000", "2012/08/12", 4, "都市教養学部", true],
  ["斉藤絢音", "サイトウアヤネ", "400-0316", "山梨県", "南アルプス市中", "080-5620-0000", "2012/08/12", 4, "都市教養学部"],
  ["小川啓", "オガワケイ", "194-0043", "東京都", "町田市成瀬台", "090-2752-0000", "2012/12/24", 4, "都市教養学部"],
  ["藤本奏", "フジモトカナデ", "226-0028", "神奈川県", "横浜市緑区い", "090-5928-0000", "2013/04/05", 3, "都市環境学部"],
  ["柳良平", "ヤナギリョウヘ", "987-0611", "宮城県", "登米市中田町", "090-2028-0000", "2013/04/05", 3, "都市環境学部"],
  ["松来一樹", "マツキカズキ", "196-0032", "東京都", "昭島市郷地町", "080-2540-0000", "2013/05/02", 3, "都市環境学部"],
  ["井上秀一", "イノウエシュウ", "182-0001", "東京都", "調布市緑ケ丘", "090-5761-0000", "2013/05/15", 3, "都市環境学部"],
  ["笠原光", "カサハラヒカル", "184-0002", "東京都", "小金井市梶野", "080-5771-0000", "2013/05/18", 3, "都市教養学部"],
  ["佐野大樹", "サノダイキ", "564-0051", "大阪府", "吹田市豊津町", "090-6340-0000", "2013/05/18", 3, "システムデザイン"],
  ["新井章子", "アライショウコ", "102-0091", "東京都", "千代田区北の", "090-3324-0000", "2014/04/03", 2, "都市教養学部"],
  ["河野和也", "コウノカズヤ", "158-0082", "東京都", "世田谷区等々", "080-5758-0000", "2014/04/03", 2, "健康福祉学部", true],
  ["長谷川京子", "ハセガワキョウ", "190-0012", "東京都", "立川市曙町1-", "070-2525-0000", "2014/05/15", 2, "健康福祉学部"],
  ["加藤涼子", "カトウリョウコ", "206-0041", "東京都", "多摩市愛宕1-", "090-2338-0000", "2015/04/06", 1, "システムデザイン"],
  ["相馬由依", "ソウマユイ", "974-8212", "福島県", "いわき市東田町", "080-4662-0000", "2015/04/06", 1, "都市環境学部"],
  ["朝倉紗希", "アサクラサキ", "154-0023", "東京都", "世田谷区若林", "08058370000", "2014/09/27", 2, "都市教養学科"],
];

const columns = ["会員ID", "氏名", "フリガナ", "郵便番号", "都道府県", "市区町村", "携帯TEL", "入会年月日", "学年ID", "学部コース", "退会"];

const navGroups: { title?: string; kind: keyof typeof iconFor; items: string[] }[] = [
  { kind: "table", items: ["サークル名簿", "月会費"] },
  { title: "クエリ", kind: "query", items: ["2013年入会会員", "会員管理", "請求管理", "入会日と所属"] },
  { title: "フォーム", kind: "form", items: ["会員情報", "会員入力"] },
  { title: "レポート", kind: "report", items: ["宛名ラベル", "学年別集計", "入会日リスト"] },
];

/* colour blocks of the blurred account name and portrait: x, y, width, height, fill */
const accountBlocks: [number, number, number, number, string][] = [
  [66, 0, 20, 6, "#bdbbba"], [86, 0, 7, 6, "#dedede"],
  [0, 6, 10, 10, "#c1c1c1"], [10, 6, 6, 10, "#d8d8d8"], [16, 6, 10, 10, "#cfcfcf"], [26, 6, 10, 10, "#eeeeee"],
  [36, 6, 10, 10, "#b9b9b9"], [46, 6, 20, 10, "#f4f4f4"], [66, 6, 10, 10, "#545153"], [76, 6, 10, 10, "#6b5f65"], [86, 6, 7, 10, "#bab5b5"],
  [0, 16, 10, 10, "#e6e6e6"], [10, 16, 6, 10, "#f9f9f9"], [16, 16, 10, 10, "#f5f5f5"], [36, 16, 10, 10, "#e0e0e0"],
  [66, 16, 10, 10, "#655c63"], [76, 16, 10, 10, "#50493b"], [86, 16, 7, 10, "#b9b0a6"],
];

/* ---------- sections ---------- */

const WindowHeader = () => (
  <Header>
    <LeftHead>
      <QuickAccess>
        <AccessLogo />
        <PlainButton aria-label="上書き保存"><SaveIcon /></PlainButton>
        <PlainButton $gap={5} aria-label="元に戻す"><UndoIcon /><Caret color="#b5b5b5" /></PlainButton>
        <PlainButton $gap={5} aria-label="やり直し"><UndoIcon flip /><Caret color="#b5b5b5" /></PlainButton>
        <PlainButton aria-label="カスタマイズ">
          <svg width="6" height="6" viewBox="0 0 6 6"><path d="M0 0h6v1H0zM0 2.500h6L3 6z" fill="#666" /></svg>
        </PlainButton>
      </QuickAccess>
      <Tabs>
        <Tab $w={59} $kind="file">ファイル</Tab>
        <Tab $w={57} $kind="active">ホーム</Tab>
        <Tab $w={54}>作成</Tab>
        <Tab $w={80}>外部データ</Tab>
        <Tab $w={121} $compact>データベース ツール</Tab>
      </Tabs>
    </LeftHead>
    <ContextHead>
      <ContextTitle>テーブル ツール</ContextTitle>
      <Tabs>
        <Tab $w={69} $compact>フィールド</Tab>
        <Tab $w={68} $compact>テーブル</Tab>
      </Tabs>
    </ContextHead>
    <RightHead>
      <TitleRow>
        <span>Clist : データベース- C:¥Users¥一郎¥Documents¥Clist.accdb (Access 2007 ～ 2013 ファイル形式) - Access</span>
        <WindowButtons>
          <HelpMark>?</HelpMark>
          <PlainButton aria-label="最小化">
            <svg width="10" height="10" viewBox="0 0 10 10"><path d="M0 6h9v2H0z" fill="#666" /></svg>
          </PlainButton>
          <PlainButton aria-label="元のサイズ">
            <svg width="11" height="10" viewBox="0 0 11 10" fill="none" stroke="#666">
              <path d="M.500 3.500h7v6h-7zM3 3V.500h7.500V7H8M3 1.500h7M0 4.500h8" />
            </svg>
          </PlainButton>
          <PlainButton aria-label="閉じる"><Cross size={11} /></PlainButton>
        </WindowButtons>
      </TitleRow>
      <Account>
        <svg width="93" height="27" viewBox="0 0 93 27" aria-hidden="true">
          {accountBlocks.map(([x, y, w, h, fill], i) => <rect key={i} x={x} y={y} width={w} height={h} fill={fill} />)}
        </svg>
      </Account>
    </RightHead>
  </Header>
);

const ViewMenu = () => (
  <ViewAnchor>
    <ViewButton>
      <BigIcon><DesignIcon /></BigIcon>
      表示
      <CaretSlot><Caret color="#333" /></CaretSlot>
    </ViewButton>
    <HighlightFrame />
    <Menu>
      <MenuItem>
        <MenuIcon $boxed><SheetIcon /></MenuIcon>
        <span>データシート ビュー(<u>H</u>)</span>
      </MenuItem>
      <MenuItem $hot>
        <MenuIcon><DesignIcon /></MenuIcon>
        <span>デザイン ビュー(<u>D</u>)</span>
        <MouseCursor width="13" height="20" viewBox="0 0 13 20">
          <path d="M.700 1v15l3.500-3.200 2.500 5.800 2.600-1.200-2.500-5.400h4.800z" fill="#fff" stroke="#222" />
        </MouseCursor>
        <HighlightFrame />
      </MenuItem>
    </Menu>
  </ViewAnchor>
);

const Ribbon = () => (
  <RibbonBar>
    <Group $w={244}>
      <GroupBody>
        <ViewMenu />
        <BigButton $w={49}>
          <BigIcon><PasteIcon /></BigIcon>
          貼り付け
          <CaretSlot><Caret /></CaretSlot>
        </BigButton>
        <SmallColumn>
          <SmallButton $dim><CutIcon />切り取り</SmallButton>
          <SmallButton><CopyIcon />コピー</SmallButton>
          <SmallButton $dim $compact><BrushIcon />書式のコピー/貼り付け</SmallButton>
        </SmallColumn>
      </GroupBody>
      <GroupFooter>
        <FooterLabel />
        <Launcher aria-label="クリップボード"><LauncherIcon /></Launcher>
      </GroupFooter>
    </Group>

    <Group $w={269}>
      <GroupBody>
        <BigButton $w={54} $compact>
          <BigIcon><FunnelIcon /></BigIcon>
          フィルター
        </BigButton>
        <SmallColumn $w={107}>
          <SmallButton><SortIcon top="A" bottom="Z" topColor={BLUE} bottomColor="#7f4fa8" />昇順</SmallButton>
          <SmallButton><SortIcon top="Z" bottom="A" topColor="#7f4fa8" bottomColor={BLUE} />降順</SmallButton>
          <SmallButton $dim $compact><SortIcon top="A" bottom="Z" topColor="#aaa" bottomColor="#aaa" clear />並べ替えの解除</SmallButton>
        </SmallColumn>
        <SmallColumn>
          <SmallButton><FilterSelectIcon />選択<Caret /></SmallButton>
          <SmallButton><AdvancedIcon />詳細設定<Caret /></SmallButton>
          <SmallButton $dim $compact><FunnelIcon size={16} color="#a9a9a9" />フィルターの実行</SmallButton>
        </SmallColumn>
      </GroupBody>
      <GroupFooter><FooterLabel>並べ替えとフィルター</FooterLabel></GroupFooter>
    </Group>

    <Group $w={221}>
      <GroupBody>
        <BigButton $w={50}>
          <BigIcon><RefreshIcon /></BigIcon>
          <span>すべて</span>
          <PlainButton as="span" $gap={4}>更新<Caret /></PlainButton>
        </BigButton>
        <SmallColumn $w={76}>
          <SmallButton><NewRecordIcon />新規作成</SmallButton>
          <SmallButton><SaveRecordIcon />保存</SmallButton>
          <SmallButton $dim><DeleteIcon />削除&ensp;<Caret /></SmallButton>
        </SmallColumn>
        <SmallColumn>
          <SmallButton><SigmaIcon />集計</SmallButton>
          <SmallButton $compact><SpellIcon />スペル チェック</SmallButton>
          <SmallButton><MoreIcon />その他<Caret /></SmallButton>
        </SmallColumn>
      </GroupBody>
      <GroupFooter><FooterLabel>レコード</FooterLabel></GroupFooter>
    </Group>

    <Group $w={114}>
      <GroupBody>
        <BigButton $w={50}>
          <BigIcon><BinocularsIcon /></BigIcon>
          検索
        </BigButton>
        <SmallColumn>
          <SmallButton><ReplaceIcon />置換</SmallButton>
          <SmallButton><GotoIcon />移動<Caret /></SmallButton>
          <SmallButton><PointerIcon />選択<Caret /></SmallButton>
        </SmallColumn>
      </GroupBody>
      <GroupFooter><FooterLabel>検索</FooterLabel></GroupFooter>
    </Group>

    <Group $w={345}>
      <GroupBody $indent={3}>
        <FormatRows>
          <FormatRow>
            <Combo $w={138}>
              <ComboSelect aria-label="フォント"><option>ＭＳ Ｐゴシック (詳細)</option></ComboSelect>
              <Caret />
            </Combo>
            <Combo $w={54}>
              <ComboSelect aria-label="フォント サイズ"><option>11</option></ComboSelect>
              <Caret />
            </Combo>
            <ToolButton aria-label="箇条書き"><ListIcon /></ToolButton>
            <ToolButton aria-label="段落番号"><ListIcon numbered /></ToolButton>
            <Divider />
            <ToolButton aria-label="インデント"><IndentIcon /></ToolButton>
            <ToolButton aria-label="インデント解除"><IndentIcon out /></ToolButton>
            <Divider />
            <ToolButton aria-label="文字列の方向"><DirectionIcon /></ToolButton>
            <ToolButton $w={10} aria-label="文字列の方向の一覧"><Caret color="#b5b5b5" /></ToolButton>
          </FormatRow>
          <FormatRow>
            <ToolButton $glyph="b">B</ToolButton>
            <ToolButton $glyph="i">I</ToolButton>
            <ToolButton $glyph="u">U</ToolButton>
            <Divider />
            <ToolButton $w={24} aria-label="フォントの色"><FontColorIcon /></ToolButton>
            <ToolButton $w={10} aria-label="フォントの色の一覧"><Caret /></ToolButton>
            <ToolButton $w={24} aria-label="強調表示"><HighlightIcon /></ToolButton>
            <ToolButton $w={10} aria-label="強調表示の一覧"><Caret color="#b5b5b5" /></ToolButton>
            <ToolButton $w={24} aria-label="背景色"><FillIcon /></ToolButton>
            <ToolButton $w={10} aria-label="背景色の一覧"><Caret /></ToolButton>
            <Divider />
            <ToolButton aria-label="左揃え"><AlignIcon kind="left" /></ToolButton>
            <ToolButton aria-label="中央揃え"><AlignIcon kind="center" /></ToolButton>
            <ToolButton aria-label="右揃え"><AlignIcon kind="right" /></ToolButton>
            <Divider />
            <ToolButton aria-label="枠線"><GridlinesIcon /></ToolButton>
            <ToolButton $w={10} aria-label="枠線の一覧"><Caret /></ToolButton>
            <Divider />
            <ToolButton aria-label="交互の行の色"><AltRowIcon /></ToolButton>
            <ToolButton $w={10} aria-label="交互の行の色の一覧"><Caret /></ToolButton>
          </FormatRow>
        </FormatRows>
      </GroupBody>
      <GroupFooter>
        <FooterLabel>テキストの書式設定</FooterLabel>
        <Launcher aria-label="テキストの書式設定"><LauncherIcon /></Launcher>
      </GroupFooter>
    </Group>

    <Collapse aria-label="リボンを折りたたむ">
      <svg width="10" height="6" viewBox="0 0 10 6"><path d="M1 5.500L5 1.500l4 4" fill="none" stroke="#666" strokeWidth="1.800" /></svg>
    </Collapse>
  </RibbonBar>
);

const Navigation = () => (
  <NavPane>
    <NavTop><PlainButton aria-label="シャッター バー"><DoubleChevron left /></PlainButton></NavTop>
    <SearchBox>
      <SearchInput aria-label="検索" />
      <svg width="12" height="12" viewBox="0 0 12 12" fill="none" stroke={BLUE} strokeWidth="1.600">
        <circle cx="7" cy="5.500" r="3.800" /><path d="M4 8.500L1 11.500" />
      </svg>
    </SearchBox>
    {navGroups.map(({ title, kind, items }) => {
      const Icon = iconFor[kind];
      return (
        <div key={kind}>
          {title && <NavHeading>{title}<DoubleChevron /></NavHeading>}
          <NavList>
            {items.map((item) => (
              <NavEntry key={item}>
                <NavItem href="#" $selected={item === "サークル名簿"}><Icon />{item}</NavItem>
              </NavEntry>
            ))}
          </NavList>
        </div>
      );
    })}
  </NavPane>
);

const Datasheet = () => (
  <DataTable>
    <colgroup>
      <SelectorCol />
      {columns.map((c) => <FieldCol key={c} />)}
      <col />
    </colgroup>
    <thead>
      <tr>
        <HeadCell aria-label="すべて選択">
          <SelectAllMark width="11" height="11" viewBox="0 0 11 11"><path d="M11 0v11H0z" fill="#c3cbd8" /></SelectAllMark>
        </HeadCell>
        {columns.map((c, i) => (
          <HeadCell key={c} $active={i === 0} scope="col">
            <HeadInner><HeadText>{c}</HeadText><Caret color="#222" /></HeadInner>
          </HeadCell>
        ))}
        <HeadCell $ghost scope="col">クリックして追加</HeadCell>
      </tr>
    </thead>
    <tbody>
      {members.map(([name, kana, zip, pref, city, tel, joined, year, course, left], i) => (
        <Row key={name} $tone={i === 0 ? "current" : i % 2 ? "even" : "odd"}>
          <Selector $current={i === 0} scope="row" />
          <Cell $right $editing={i === 0}>{i === 0 ? <EditSelection>1</EditSelection> : i + 1}</Cell>
          <Cell>{name}</Cell>
          <Cell $kana>{kana}</Cell>
          <Cell>{zip}</Cell>
          <Cell>{pref}</Cell>
          <Cell>{city}</Cell>
          <Cell>{tel}</Cell>
          <Cell $right>{joined}</Cell>
          <Cell $right>{year}</Cell>
          <Cell>{course}</Cell>
          <Cell $center><Tick type="checkbox" defaultChecked={!!left} aria-label={name + " 退会"} /></Cell>
          <Cell />
        </Row>
      ))}
      <Row $tone="even">
        <Selector scope="row">
          <SelectAllMark width="9" height="9" viewBox="0 0 9 9">
            <path d="M4.500 0v9M0 4.500h9M1.500 1.500l6 6M7.500 1.500l-6 6" stroke="#111" />
          </SelectAllMark>
        </Selector>
        <Cell $right>(新規)</Cell>
        {columns.slice(1).map((c) => (
          <Cell key={c} $right={c === "学年ID"}>
            {c === "学年ID" ? "0" : c === "退会" ? <Tick type="checkbox" aria-label="新規 退会" /> : null}
          </Cell>
        ))}
        <Cell />
      </Row>
      {Array.from({ length: 8 }, (_, r) => (
        <Row key={r} $tone="blank">
          <Selector $blank />
          {columns.map((c) => <Cell key={c} />)}
          <Cell />
        </Row>
      ))}
    </tbody>
  </DataTable>
);

const Records = () => (
  <RecordBar>
    <RecordSection $w={188}>
      <RecordLabel>レコード:</RecordLabel>
      <NavStep $w={18} aria-label="先頭"><Arrow kind="first" /></NavStep>
      <NavStep $w={16} aria-label="前"><Arrow kind="prev" color="#b5b5b5" /></NavStep>
      <RecordInput $w={50} defaultValue="1 / 21" aria-label="現在のレコード" />
      <NavStep $w={20} aria-label="次"><Arrow kind="next" /></NavStep>
      <NavStep $w={16} aria-label="最終"><Arrow kind="last" /></NavStep>
      <NavStep $w={18} aria-label="新規"><Arrow kind="new" /></NavStep>
    </RecordSection>
    <RecordSection $w={103}>
      <FilterState>
        <svg width="22" height="15" viewBox="0 0 22 15" aria-hidden="true">
          <path d="M6 1h12v1.500L13.500 7v6h-3V7L6 2.500z" fill="#ababab" />
          <path d="M12 7l7 7M19 7l-7 7" stroke="#b5b5b5" strokeWidth="1.600" />
        </svg>
        フィルターなし
      </FilterState>
    </RecordSection>
    <RecordSection $w={102}>
      <RecordInput $w={71} defaultValue="検索" aria-label="レコードの検索" />
    </RecordSection>
    <ScrollBar>
      <ScrollStep aria-label="左へ"><Arrow kind="prev" color="#666" /></ScrollStep>
      <ScrollThumb />
      <ScrollRest />
      <ScrollStep aria-label="右へ"><Arrow kind="next" color="#666" /></ScrollStep>
    </ScrollBar>
  </RecordBar>
);

export default function App() {
  return (
    <Shell>
      <GlobalStyle />
      <WindowHeader />
      <Ribbon />
      <Main>
        <Navigation />
        <DocArea>
          <DocStrip>
            <DocTab>
              <DocTabFace><TableIcon />サークル名簿</DocTabFace>
              <svg width="15" height="23" viewBox="0 0 15 23" aria-hidden="true">
                <path d="M0 0c6 0 6 4 8 9l3 9c1 3 2 5 4 5H0z" fill="#fff" />
                <path d="M0 .500c6 0 6 4 8 9l3 8.500c1 3 2 4.500 4 4.500" fill="none" stroke="#8e8a86" />
              </svg>
            </DocTab>
            <PlainButton aria-label="タブを閉じる"><Cross size={7} stroke={2.4} /></PlainButton>
          </DocStrip>
          <GridView><Datasheet /></GridView>
          <Records />
        </DocArea>
      </Main>
      <StatusBar>
        <StatusText>データシート ビュー</StatusText>
        <StatusButton $on aria-label="データシート ビュー">
          <svg width="14" height="13" viewBox="0 0 14 13" fill="none" stroke="#fff">
            <path d="M.500.500h13v12H.500zM0 3.500h14M4.500 0v13M6 6.500h3M10 6.500h2M6 9.500h3M10 9.500h2" />
          </svg>
        </StatusButton>
        <StatusButton aria-label="デザイン ビュー">
          <svg width="15" height="14" viewBox="0 0 15 14" fill="none" stroke="#fff">
            <path d="M.500 0v8.500h3.500M.500 2l3.500 4M1.500 10.500h12v3h-12zM4.500 11v1M7.500 11v1M10.500 11v1" />
            <path d="M5 8.500L12.500 1" strokeWidth="2" />
          </svg>
        </StatusButton>
      </StatusBar>
    </Shell>
  );
}
